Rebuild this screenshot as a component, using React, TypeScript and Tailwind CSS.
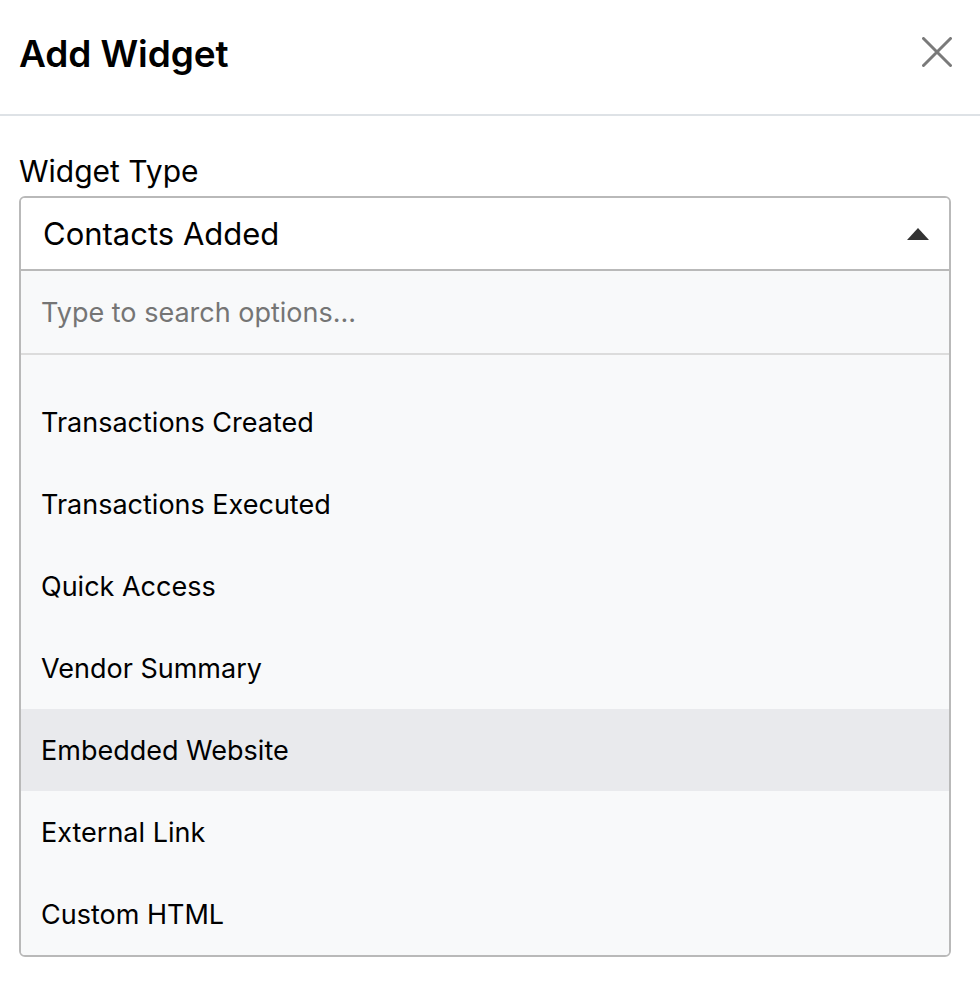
import React from "react";

const options = [
  "Transactions Created",
  "Transactions Executed",
  "Quick Access",
  "Vendor Summary",
  "Embedded Website",
  "External Link",
  "Custom HTML",
];

export default function App() {
  return (
    <div
      className="w-[980px] h-[986px] bg-white text-black"
      style={{ fontFamily: "Inter, 'Noto Sans', sans-serif" }}
    >
      <div className="h-[114px] flex items-center justify-between pl-[19px] pr-[28px]">
        <h1 className="text-[37px] font-semibold leading-none tracking-[-0.1px] -mt-[8px]">Add Widget</h1>
        <button className="w-[30px] h-[30px] flex items-center justify-center -mt-[10px]">
          <svg width="30" height="30" viewBox="0 0 30 30">
            <path d="M1.5 1.5 L28.5 28.5 M28.5 1.5 L1.5 28.5" stroke="#7a7a7a" strokeWidth="3" strokeLinecap="round" />
          </svg>
        </button>
      </div>
      <div className="h-[2px] bg-[#dee2e6]" />
      <div className="pl-[19px] pr-[29px] pt-[37px]">
        <label className="block text-[30px] leading-[36px] mb-[7px]">Widget Type</label>
        <div className="border-2 border-[#b9b9b9] rounded-[6px] overflow-hidden">
          <div className="h-[73px] flex items-center justify-between pl-[22px] pr-[20px] bg-white border-b-2 border-[#b9b9b9]">
            <span className="text-[31px] leading-none">Contacts Added</span>
            <svg width="22" height="12" viewBox="0 0 22 12">
              <path d="M11 0 L22 12 L0 12 Z" fill="#333" />
            </svg>
          </div>
          <div className="h-[84px] flex items-center px-[20px] bg-[#f8f9fa] border-b-2 border-[#dcdcdc]">
            <span className="text-[27px] leading-none text-[#757575]">Type to search options...</span>
          </div>
          <div className="bg-[#f8f9fa] pt-[26px]">
            {options.map((o) => (
              <div
                key={o}
                className={
                  "h-[82px] flex items-center px-[20px] text-[27px] leading-none " +
                  (o === "Embedded Website" ? "bg-[#e9eaed]" : "")
                }
              >
                {o}
              </div>
            ))}
          </div>
        </div>
      </div>
    </div>
  );
}
